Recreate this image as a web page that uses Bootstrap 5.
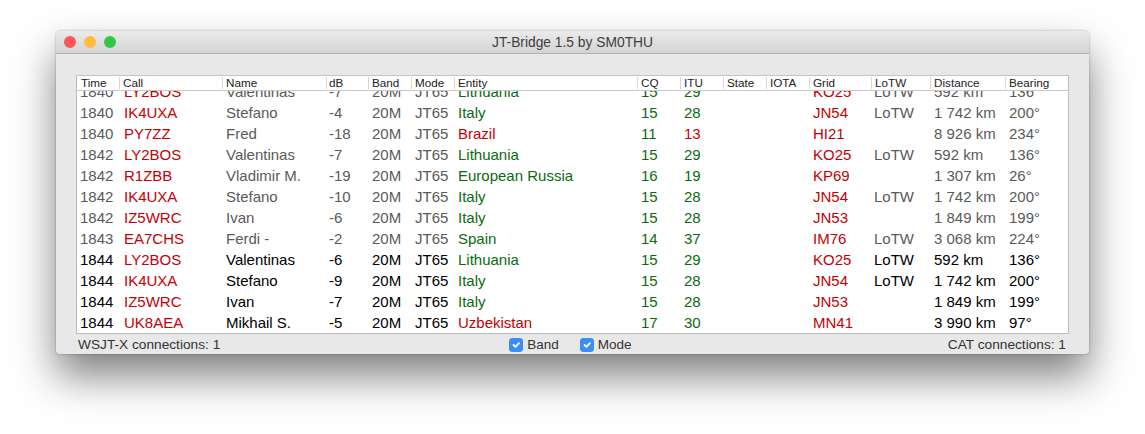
<!DOCTYPE html>
<html lang="en">
<head>
<meta charset="utf-8">
<title>JT-Bridge</title>
<link rel="stylesheet" href="https://cdn.jsdelivr.net/npm/bootstrap@5.3.0/dist/css/bootstrap.min.css">
<style>
html,body{height:100%;background:#fff;overflow:hidden}
body{font-family:"Liberation Sans",Arial,sans-serif;padding:31px 56px 0}
.mac-win{width:1033px;height:323px;background:#e8e8e8;border-radius:5px 5px 4px 4px;box-shadow:0 22px 42px rgba(0,0,0,.5),0 0 3px rgba(0,0,0,.28)}
.mac-title{height:23px;background:linear-gradient(#ebebeb,#d3d3d3);border-bottom:1px solid #b2b2b2;border-radius:5px 5px 0 0;padding:0 8px;color:#3e3e3e;font-size:13.8px}
.mac-title-text{left:0;right:0;top:0;line-height:24px;text-align:center}
.dot{width:12px;height:12px;border-radius:50%}
.dot-r{background:#fc5753}.dot-y{background:#fdbc40}.dot-g{background:#33c748}
.log-box{margin:21px 20px 0;height:259px;background:#fff;border:1px solid #bcbcbc;border-top-color:#c4c4c4}
.log-head{height:15px;border-bottom:1px solid #c8c8c8;background:#fff;position:relative;z-index:1}
.log-rows{height:242px}
.log-table{table-layout:fixed;width:991px;border-collapse:collapse}
.log-head .log-table th{font-size:11.7px;font-weight:400;color:#222;line-height:13px;height:14px;padding:0 0 1px 4px;white-space:nowrap;position:relative}
.log-head .log-table th:nth-child(4){padding-left:3px}
.log-head .log-table th+th::before{content:"";position:absolute;left:0;top:1px;height:12px;border-left:1px solid #d6d6d6}
.log-rows .log-table{margin-top:-10px}
.log-rows td{font-size:15px;line-height:21px;height:21px;padding:0 0 0 4px;white-space:nowrap;color:#5a5a5a}
.log-rows tr.now td{color:#000}
.log-rows td:nth-child(1),.log-rows td:nth-child(4),.log-rows td:nth-child(13){padding-left:3px}
.log-rows td:nth-child(2){padding-left:5px}
.log-rows tr td.rd{color:#c40006}
.log-rows tr td.gr{color:#0b6a10}
.mac-status{height:20px;padding:1px 23px 0 22px;font-size:13.7px;line-height:20px;color:#333}
.mac-status>span{flex:1 1 0}
.mac-checks{gap:21px}
.mac-status .form-check{min-height:0;margin:0;padding:0;gap:4px;display:flex;align-items:center}
.mac-status .form-check-input{float:none;margin:0;width:14px;height:14px;border-radius:3px;background-color:#3a8ff7;border-color:#3a8ff7;opacity:1}
.mac-status .form-check-label{color:#333;font-size:13.5px}
.chk-wrap{flex:1 1 0;justify-content:center;padding-right:3px}
.log-cols col:nth-child(1){width:42px}.log-cols col:nth-child(2){width:103px}.log-cols col:nth-child(3){width:104px}
.log-cols col:nth-child(4){width:42px}.log-cols col:nth-child(5){width:43px}.log-cols col:nth-child(6){width:43px}
.log-cols col:nth-child(7){width:183px}.log-cols col:nth-child(8){width:43px}.log-cols col:nth-child(9){width:43px}
.log-cols col:nth-child(10){width:43px}.log-cols col:nth-child(11){width:43px}.log-cols col:nth-child(12){width:62px}
.log-cols col:nth-child(13){width:59px}.log-cols col:nth-child(14){width:75px}.log-cols col:nth-child(15){width:63px}
</style>
</head>
<body>
<div class="mac-win d-flex flex-column">
  <div class="mac-title position-relative d-flex align-items-center gap-2 flex-shrink-0">
    <span class="dot dot-r"></span><span class="dot dot-y"></span><span class="dot dot-g"></span>
    <div class="mac-title-text position-absolute">JT-Bridge 1.5 by SM0THU</div>
  </div>
  <div class="log-box flex-shrink-0">
    <div class="log-head">
      <table class="log-table"><colgroup class="log-cols"><col><col><col><col><col><col><col><col><col><col><col><col><col><col><col></colgroup>
      <thead><tr><th>Time</th><th>Call</th><th>Name</th><th>dB</th><th>Band</th><th>Mode</th><th>Entity</th><th>CQ</th><th>ITU</th><th>State</th><th>IOTA</th><th>Grid</th><th>LoTW</th><th>Distance</th><th>Bearing</th></tr></thead></table>
    </div>
    <div class="log-rows overflow-hidden">
      <table class="log-table"><colgroup class="log-cols"><col><col><col><col><col><col><col><col><col><col><col><col><col><col><col></colgroup>
      <tbody>
      <tr><td>1840</td><td class="rd">LY2BOS</td><td>Valentinas</td><td>-7</td><td>20M</td><td>JT65</td><td class="gr">Lithuania</td><td class="gr">15</td><td class="gr">29</td><td></td><td></td><td class="rd">KO25</td><td>LoTW</td><td>592 km</td><td>136°</td></tr>
      <tr><td>1840</td><td class="rd">IK4UXA</td><td>Stefano</td><td>-4</td><td>20M</td><td>JT65</td><td class="gr">Italy</td><td class="gr">15</td><td class="gr">28</td><td></td><td></td><td class="rd">JN54</td><td>LoTW</td><td>1 742 km</td><td>200°</td></tr>
      <tr><td>1840</td><td class="rd">PY7ZZ</td><td>Fred</td><td>-18</td><td>20M</td><td>JT65</td><td class="rd">Brazil</td><td class="gr">11</td><td class="rd">13</td><td></td><td></td><td class="rd">HI21</td><td></td><td>8 926 km</td><td>234°</td></tr>
      <tr><td>1842</td><td class="rd">LY2BOS</td><td>Valentinas</td><td>-7</td><td>20M</td><td>JT65</td><td class="gr">Lithuania</td><td class="gr">15</td><td class="gr">29</td><td></td><td></td><td class="rd">KO25</td><td>LoTW</td><td>592 km</td><td>136°</td></tr>
      <tr><td>1842</td><td class="rd">R1ZBB</td><td>Vladimir M.</td><td>-19</td><td>20M</td><td>JT65</td><td class="gr">European Russia</td><td class="gr">16</td><td class="gr">19</td><td></td><td></td><td class="rd">KP69</td><td></td><td>1 307 km</td><td>26°</td></tr>
      <tr><td>1842</td><td class="rd">IK4UXA</td><td>Stefano</td><td>-10</td><td>20M</td><td>JT65</td><td class="gr">Italy</td><td class="gr">15</td><td class="gr">28</td><td></td><td></td><td class="rd">JN54</td><td>LoTW</td><td>1 742 km</td><td>200°</td></tr>
      <tr><td>1842</td><td class="rd">IZ5WRC</td><td>Ivan</td><td>-6</td><td>20M</td><td>JT65</td><td class="gr">Italy</td><td class="gr">15</td><td class="gr">28</td><td></td><td></td><td class="rd">JN53</td><td></td><td>1 849 km</td><td>199°</td></tr>
      <tr><td>1843</td><td class="rd">EA7CHS</td><td>Ferdi -</td><td>-2</td><td>20M</td><td>JT65</td><td class="gr">Spain</td><td class="gr">14</td><td class="gr">37</td><td></td><td></td><td class="rd">IM76</td><td>LoTW</td><td>3 068 km</td><td>224°</td></tr>
      <tr class="now"><td>1844</td><td class="rd">LY2BOS</td><td>Valentinas</td><td>-6</td><td>20M</td><td>JT65</td><td class="gr">Lithuania</td><td class="gr">15</td><td class="gr">29</td><td></td><td></td><td class="rd">KO25</td><td>LoTW</td><td>592 km</td><td>136°</td></tr>
      <tr class="now"><td>1844</td><td class="rd">IK4UXA</td><td>Stefano</td><td>-9</td><td>20M</td><td>JT65</td><td class="gr">Italy</td><td class="gr">15</td><td class="gr">28</td><td></td><td></td><td class="rd">JN54</td><td>LoTW</td><td>1 742 km</td><td>200°</td></tr>
      <tr class="now"><td>1844</td><td class="rd">IZ5WRC</td><td>Ivan</td><td>-7</td><td>20M</td><td>JT65</td><td class="gr">Italy</td><td class="gr">15</td><td class="gr">28</td><td></td><td></td><td class="rd">JN53</td><td></td><td>1 849 km</td><td>199°</td></tr>
      <tr class="now"><td>1844</td><td class="rd">UK8AEA</td><td>Mikhail S.</td><td>-5</td><td>20M</td><td>JT65</td><td class="rd">Uzbekistan</td><td class="gr">17</td><td class="gr">30</td><td></td><td></td><td class="rd">MN41</td><td></td><td>3 990 km</td><td>97°</td></tr>
      </tbody></table>
    </div>
  </div>
  <div class="mac-status d-flex align-items-center">
    <span>WSJT-X connections: 1</span>
    <div class="d-flex mac-checks chk-wrap">
      <div class="form-check"><input class="form-check-input" type="checkbox" id="cb" checked><label class="form-check-label" for="cb">Band</label></div>
      <div class="form-check"><input class="form-check-input" type="checkbox" id="cm" checked><label class="form-check-label" for="cm">Mode</label></div>
    </div>
    <span class="text-end">CAT connections: 1</span>
  </div>
</div>
<script src="https://cdn.jsdelivr.net/npm/bootstrap@5.3.0/dist/js/bootstrap.bundle.min.js"></script>
</body>
</html>
